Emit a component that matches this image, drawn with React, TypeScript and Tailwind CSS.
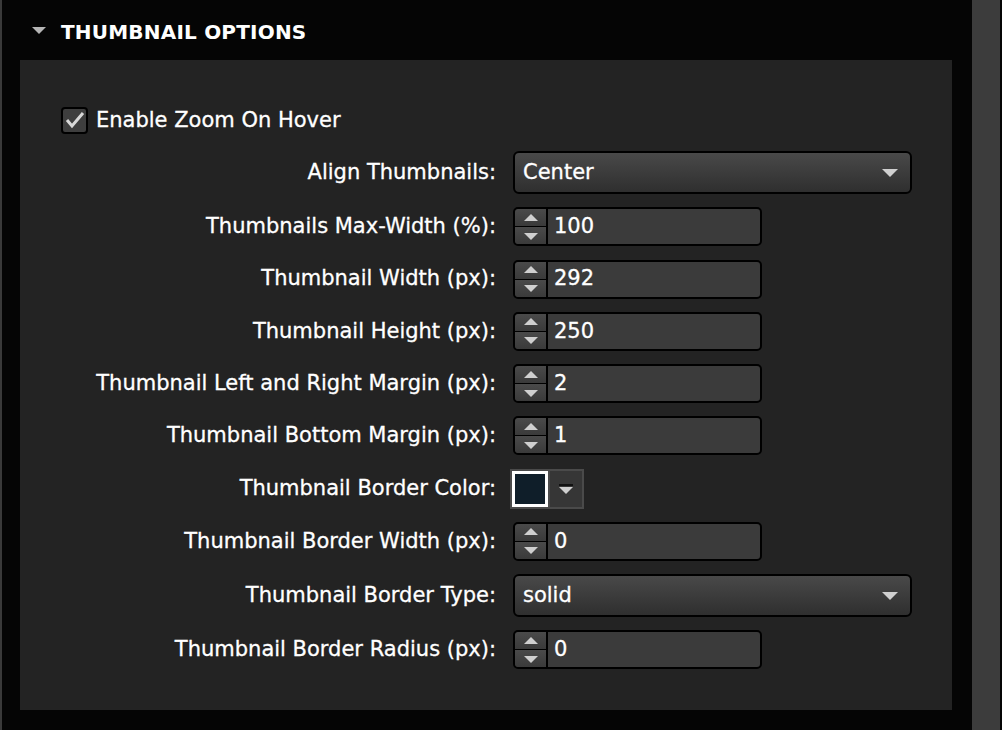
import React from 'react';

const font = { fontFamily: '"DejaVu Sans", "Liberation Sans", sans-serif' };

const Spinner: React.FC = () => (
    <div className="flex flex-col w-[33px] h-full border-r-2 border-black">
        <div className="flex-1 flex items-center justify-center bg-gradient-to-b from-[#4a4a4a] to-[#3a3a3a] border-b border-black rounded-tl-[4px]">
            <svg width="14" height="8" viewBox="0 0 14 8"><path d="M0 7 L7 0 L14 7 Z" fill="#cfcfcf" /></svg>
        </div>
        <div className="flex-1 flex items-center justify-center bg-gradient-to-b from-[#4a4a4a] to-[#3a3a3a] rounded-bl-[4px]">
            <svg width="14" height="8" viewBox="0 0 14 8"><path d="M0 1 L14 1 L7 8 Z" fill="#cfcfcf" /></svg>
        </div>
    </div>
);

const NumberInput: React.FC<{ value: string }> = ({ value }) => (
    <div className="flex items-stretch w-[249px] h-[39px] bg-[#3b3b3b] border-2 border-black rounded-[5px] overflow-hidden">
        <Spinner />
        <div className="flex items-center pl-[6px] text-white text-[21px] [-webkit-text-stroke:0.3px_white]">{value}</div>
    </div>
);

const Select: React.FC<{ value: string }> = ({ value }) => (
    <div className="flex items-center justify-between w-[399px] h-[43px] px-[8px] bg-gradient-to-b from-[#494949] to-[#2f2f2f] border-2 border-black rounded-[6px] text-white text-[21px] [-webkit-text-stroke:0.3px_white]">
        <span>{value}</span>
        <svg width="16" height="9" viewBox="0 0 16 9" className="mr-[4px]"><path d="M0 1 L16 1 L8 9 Z" fill="#d0d0d0" /></svg>
    </div>
);

const ColorPicker: React.FC = () => (
    <div className="-ml-[3px] flex items-center w-[74px] h-[40px] bg-[#4a4a4a] p-[2px] gap-[2px]">
        <div className="w-[36px] h-[36px] border-[3px] border-white bg-[#0f1e29]" />
        <div className="flex-1 h-full bg-[#363636] flex items-center justify-center">
            <svg width="14" height="10" viewBox="0 0 14 10"><rect x="0" y="0" width="14" height="2" fill="#111" /><path d="M0 3 L14 3 L7 10 Z" fill="#cfcfcf" /></svg>
        </div>
    </div>
);

type Row = { label: string; control: React.ReactNode };

const rows: Row[] = [
    { label: 'Align Thumbnails:', control: <Select value="Center" /> },
    { label: 'Thumbnails Max-Width (%):', control: <NumberInput value="100" /> },
    { label: 'Thumbnail Width (px):', control: <NumberInput value="292" /> },
    { label: 'Thumbnail Height (px):', control: <NumberInput value="250" /> },
    { label: 'Thumbnail Left and Right Margin (px):', control: <NumberInput value="2" /> },
    { label: 'Thumbnail Bottom Margin (px):', control: <NumberInput value="1" /> },
    { label: 'Thumbnail Border Color:', control: <ColorPicker /> },
    { label: 'Thumbnail Border Width (px):', control: <NumberInput value="0" /> },
    { label: 'Thumbnail Border Type:', control: <Select value="solid" /> },
    { label: 'Thumbnail Border Radius (px):', control: <NumberInput value="0" /> },
];

const App: React.FC = () => {
    return (
        <div className="w-[1002px] h-[730px] bg-[#050505] flex overflow-hidden" style={font}>
            <div className="w-[2px] bg-[#3a3a3a]" />
            <div className="w-[950px] flex flex-col">
                <div className="h-[60px] flex items-center pl-[30px] pt-[4px]">
                    <svg width="14" height="8" viewBox="0 0 14 8" className="mr-[15px] -mt-[2px]"><path d="M0 0 L14 0 L7 7 Z" fill="#b5b5b5" /></svg>
                    <span className="text-white font-bold text-[20px] tracking-[0.2px]">THUMBNAIL OPTIONS</span>
                </div>
                <div className="ml-[18px] w-[932px] h-[650px] bg-[#232323] pt-[46px]">
                    <div className="flex items-center h-[28px] pl-[41px] gap-[8px]">
                        <div className="w-[27px] h-[27px] rounded-[4px] bg-[#3e3e3e] border-2 border-black flex items-center justify-center">
                            <svg width="20" height="18" viewBox="0 0 20 18"><path d="M2 9 L7 15 L18 2" stroke="#d8d8d8" strokeWidth="3" fill="none" /></svg>
                        </div>
                        <span className="text-white text-[21px] leading-[28px] [-webkit-text-stroke:0.3px_white]">Enable Zoom On Hover</span>
                    </div>
                    <div className="mt-[17px] flex flex-col gap-[13.25px]">
                        {rows.map((r) => (
                            <div key={r.label} className="flex items-center">
                                <div className="w-[478px] pr-[2px] text-right text-white text-[21px] [-webkit-text-stroke:0.3px_white]">{r.label}</div>
                                <div className="ml-[15px]">{r.control}</div>
                            </div>
                        ))}
                    </div>
                </div>
            </div>
            <div className="w-[20px]" />
            <div className="w-[28px] bg-[#3c3c3c]" />
        </div>
    );
};

export default App;
